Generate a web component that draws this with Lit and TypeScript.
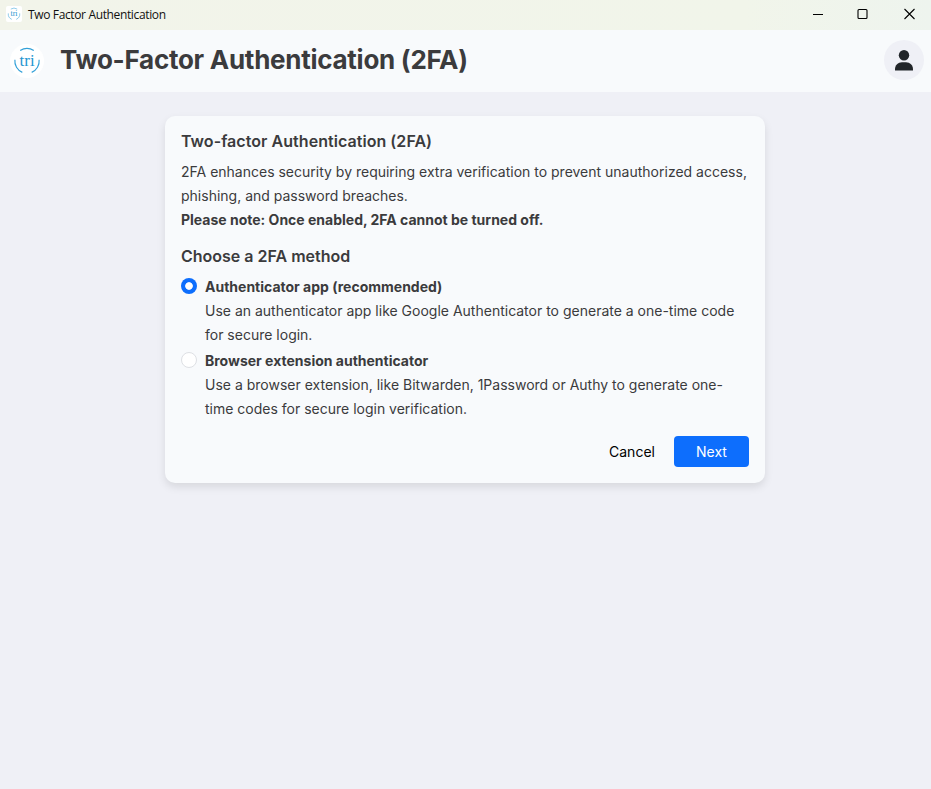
import { LitElement, html, svg, css } from "lit";
import { customElement, state } from "lit/decorators.js";

const logoArt = svg`
  <circle cx="17" cy="17" r="17" fill="#fff"></circle>
  <g fill="none" stroke="#32a0d8" stroke-width="1.15">
    <path d="M10.2 6.6A12.3 12.3 0 0 1 23.8 6.6"></path>
    <path d="M4.9 15.7A12.3 12.3 0 0 0 12.3 28.4"></path>
    <path d="M29.1 15.7A12.3 12.3 0 0 1 21.7 28.4"></path>
  </g>
  <text x="9.6" y="22" textLength="15" lengthAdjust="spacingAndGlyphs" font-family="Liberation Serif, serif" font-size="16.5" fill="#2496d1">tri</text>`;

@customElement("app-root")
export class AppRoot extends LitElement {
  @state() private method = 0;

  private options = [
    {
      title: "Authenticator app (recommended)",
      text: "Use an authenticator app like Google Authenticator to generate a one-time code for secure login.",
    },
    {
      title: "Browser extension authenticator",
      text: "Use a browser extension, like Bitwarden, 1Password or Authy to generate one-time codes for secure login verification.",
    },
  ];

  static styles = css`
    :host {
      display: flex;
      flex-direction: column;
      height: 100vh;
      background: #eff0f6;
      color: #3b3b3d;
      font-family: Inter, sans-serif;
      font-size: 14px;
      line-height: 24px;
      overflow: hidden;
    }
    * { box-sizing: border-box; }
    .titlebar {
      flex: none;
      display: flex;
      align-items: center;
      height: 30px;
      padding-left: 6px;
      background: linear-gradient(90deg, #f2f4ea, #f1f5ea 80%, #eef4ee);
      color: #111;
    }
    .mini { width: 16px; height: 16px; background: #fff; border-radius: 2px; margin-top: -2px; }
    .caption {
      flex: 1;
      margin-left: 6px;
      font: 12px/16px "Open Sans", sans-serif;
      letter-spacing: -0.36px;
    }
    .controls { display: flex; margin-top: -2px; }
    .controls svg { display: block; width: 45.5px; height: 28px; }
    header {
      flex: none;
      display: flex;
      align-items: center;
      height: 62px;
      padding: 0 7px 2px 10px;
      background: #f8fafc;
    }
    .logo { width: 34px; height: 34px; margin-top: 2px; }
    h1 {
      flex: 1;
      margin: 0 0 0 16px;
      font-size: 26px;
      line-height: 32px;
      font-weight: 700;
      letter-spacing: -0.27px;
    }
    .avatar {
      width: 40px;
      height: 40px;
      border-radius: 50%;
      background: #eff0f6;
    }
    .avatar svg { display: block; width: 40px; height: 40px; }
    .card {
      width: 600px;
      height: 367px;
      margin: 24px 0 0 165px;
      padding: 16px;
      border-radius: 10px;
      background: #f8fafc;
      box-shadow: 0 4px 8px rgba(0, 0, 0, 0.1);
    }
    h2 { margin: 0 0 9px; font-size: 16px; line-height: 19px; font-weight: 600; letter-spacing: 0.05px; }
    p { margin: 0; }
    .note { font-weight: 700; }
    .choose { margin: 15px 0 9px; letter-spacing: 0; }
    .option { display: flex; gap: 8px; margin-bottom: 2px; }
    .radio {
      flex: none;
      width: 16px;
      height: 16px;
      margin-top: 3px;
      border: 1px solid #dee0e4;
      border-radius: 50%;
      background: #fff;
    }
    .radio.on {
      border: 0;
      background: radial-gradient(circle, #fff 3.4px, #0d6efd 4.2px);
    }
    .option-title { font-weight: 700; }
    .actions { display: flex; justify-content: flex-end; gap: 8px; margin-top: 15px; }
    button {
      height: 31px;
      padding: 0;
      border: 0;
      border-radius: 4px;
      background: none;
      color: #000;
      font: 14px/21px Inter, sans-serif;
    }
    .cancel { width: 68px; }
    .next { width: 75px; background: #0d6efd; color: #fff; }
  `;

  render() {
    return html`
      <div class="titlebar">
        <svg class="mini" viewBox="0 0 34 34">${logoArt}</svg>
        <span class="caption">Two Factor Authentication</span>
        <div class="controls">
          <svg viewBox="0 0 45.5 28"><path d="M18 14.5h10" stroke="#000"></path></svg>
          <svg viewBox="0 0 45.5 28"><rect x="18" y="9.5" width="9" height="9" rx="1" fill="none" stroke="#000" stroke-width="1.1"></rect></svg>
          <svg viewBox="0 0 45.5 28"><path d="M18.5 9l10 10M28.5 9l-10 10" stroke="#000" stroke-width="1.1"></path></svg>
        </div>
      </div>
      <header>
        <svg class="logo" viewBox="0 0 34 34">${logoArt}</svg>
        <h1>Two-Factor Authentication (2FA)</h1>
        <div class="avatar">
          <svg viewBox="0 0 40 40" fill="#212529">
            <circle cx="20" cy="15.3" r="5.2"></circle>
            <path d="M11 30.4v-1.2c0-4 3-6.9 7-6.9h4c4 0 7 2.9 7 6.9v1.2z"></path>
          </svg>
        </div>
      </header>
      <section class="card">
        <h2>Two-factor Authentication (2FA)</h2>
        <p>2FA enhances security by requiring extra verification to prevent unauthorized access, phishing, and password breaches.</p>
        <p class="note">Please note: Once enabled, 2FA cannot be turned off.</p>
        <h2 class="choose">Choose a 2FA method</h2>
        ${this.options.map(
          (o, i) => html`
            <div class="option" @click=${() => (this.method = i)}>
              <span class="radio ${this.method === i ? "on" : ""}"></span>
              <div>
                <div class="option-title">${o.title}</div>
                <p>${o.text}</p>
              </div>
            </div>
          `
        )}
        <div class="actions">
          <button class="cancel">Cancel</button>
          <button class="next">Next</button>
        </div>
      </section>
    `;
  }
}
